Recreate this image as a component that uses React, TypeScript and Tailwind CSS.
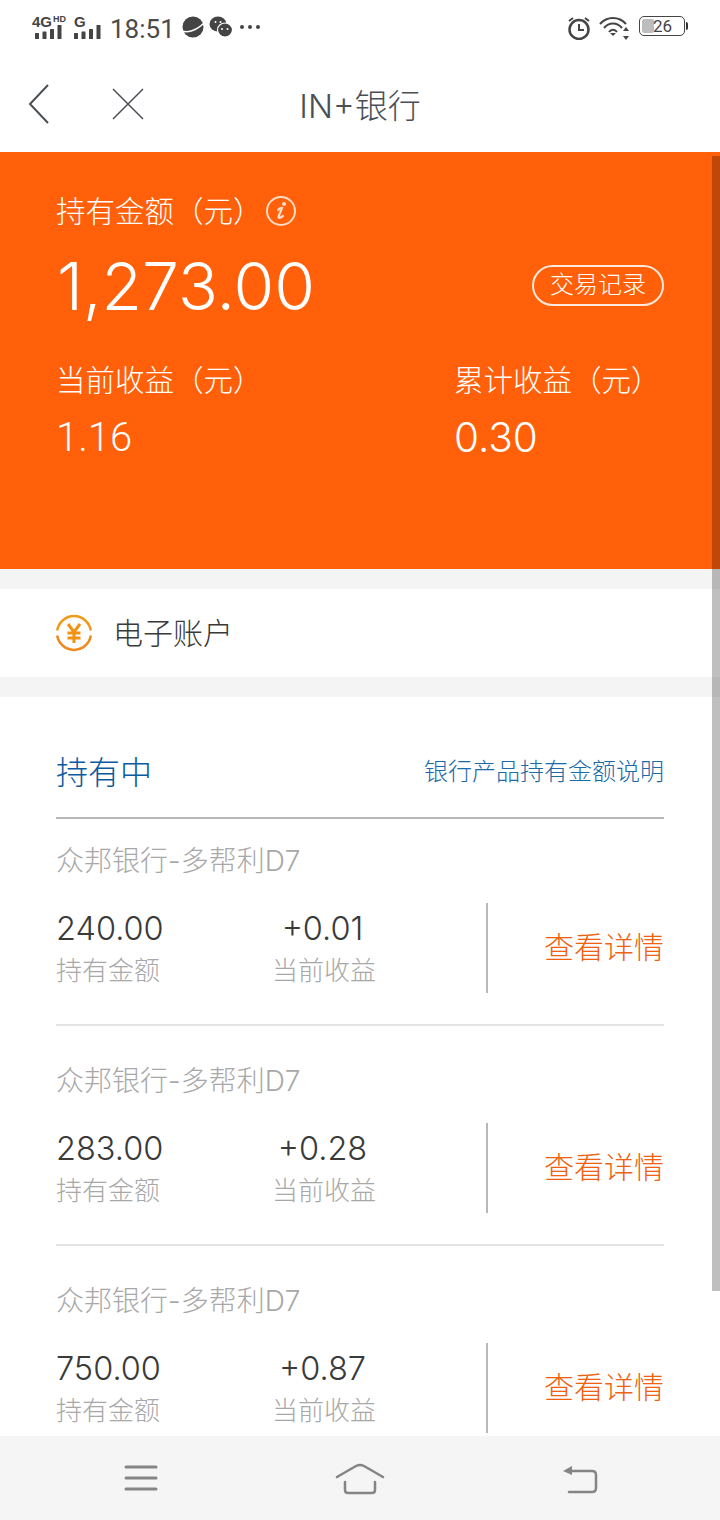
const cjk = "font-['Inter','Noto_Sans_CJK_SC',sans-serif]"

const holdings = [
  { amount: '240.00', gain: '+0.01' },
  { amount: '283.00', gain: '+0.28' },
  { amount: '750.00', gain: '+0.87' },
]

function SignalBars({ className }: { className?: string }) {
  return (
    <svg width="28" height="14" viewBox="0 0 28 14" fill="#444" className={className}>
      <rect x="0" y="8" width="4" height="6" rx="0.5" />
      <rect x="7.5" y="6.5" width="4" height="7.5" rx="0.5" />
      <rect x="15" y="4" width="4" height="10" rx="0.5" />
      <rect x="22.5" y="0" width="4" height="14" rx="0.5" />
    </svg>
  )
}

function StatusBar() {
  return (
    <div className="h-[60px] flex items-start justify-between relative">
      <div className="flex items-start pl-[32px] pt-[14px]">
        <div className="w-[36px] h-[26px] relative">
          <span className="absolute left-0 top-[1px] text-[15px] leading-[14px] font-bold text-[#444] font-['Liberation_Sans',sans-serif]">4G</span>
          <span className="absolute left-[21px] top-0 text-[9px] leading-[10px] font-bold text-[#444] font-['Liberation_Sans',sans-serif]">HD</span>
          <SignalBars className="absolute left-[3px] top-[11px]" />
        </div>
        <div className="w-[32px] h-[26px] relative ml-[6px]">
          <span className="absolute left-0 top-[1px] text-[15px] leading-[14px] font-bold text-[#444] font-['Liberation_Sans',sans-serif]">G</span>
          <SignalBars className="absolute left-[0px] top-[11px]" />
        </div>
        <span className="font-['Roboto',sans-serif] ml-[4px] text-[26px] leading-[30px] text-[#4a4a4a]">18:51</span>
        <svg width="24" height="24" viewBox="0 0 24 24" className="ml-[6px] mt-[1px]">
          <circle cx="12" cy="12" r="10.5" fill="#444" />
          <path d="M1 16 C6 18 15 16 23 8" fill="none" stroke="#fff" strokeWidth="1.5" />
        </svg>
        <svg width="24" height="24" viewBox="0 0 24 24" className="ml-[4px] mt-[1px]" fill="#444">
          <ellipse cx="9" cy="9" rx="8.5" ry="7.5" />
          <ellipse cx="16" cy="15" rx="7.5" ry="7" stroke="#fff" strokeWidth="1.2" />
          <circle cx="13" cy="14" r="1" fill="#fff" />
          <circle cx="18.5" cy="14" r="1" fill="#fff" />
          <circle cx="6.5" cy="7" r="1" fill="#fff" />
          <circle cx="11.5" cy="7" r="1" fill="#fff" />
        </svg>
        <div className="flex gap-[4px] ml-[7px] mt-[11px]">
          <span className="w-[4px] h-[4px] rounded-full bg-[#444]" />
          <span className="w-[4px] h-[4px] rounded-full bg-[#444]" />
          <span className="w-[4px] h-[4px] rounded-full bg-[#444]" />
        </div>
      </div>
      <div className="flex items-start pr-[32px] pt-[16px]">
        <svg width="24" height="24" viewBox="0 0 24 24" fill="none" stroke="#444" className="mr-[8px]">
          <circle cx="12" cy="13.5" r="9.5" strokeWidth="2.5" />
          <path d="M12 8v6h5" strokeWidth="2" />
          <path d="M2 5l4-3M22 5l-4-3" strokeWidth="2" />
        </svg>
        <svg width="32" height="24" viewBox="0 0 32 24" fill="none" stroke="#444" strokeWidth="2" className="mr-[8px]">
          <path d="M1 8 C8 0 20 0 27 8" />
          <path d="M5 12 C10 6 18 6 23 12" />
          <path d="M10 16 C12 13 16 13 18 16" fill="none" />
          <path d="M11 17h6l-3 3z" fill="#444" stroke="none" />
          <path d="M27 11l3 4h-6zM27 24l3-4h-6z" fill="#444" stroke="none" />
        </svg>
        <div className="w-[46px] h-[20px] rounded-[5px] border border-[#444] relative flex items-center">
          <div className="absolute left-[2px] top-[2px] bottom-[2px] w-[12px] rounded-[2px] bg-[#bdbdbd]" />
          <span className="font-['Roboto',sans-serif] relative ml-[13px] text-[17px] leading-[18px] text-[#444]">26</span>
        </div>
        <div className="w-[2px] h-[8px] bg-[#333] mt-[6px] ml-[1px] rounded-r-sm" />
      </div>
    </div>
  )
}

function NavBar() {
  return (
    <div className="h-[92px] relative flex items-center justify-center">
      <svg width="24" height="42" viewBox="0 0 24 42" fill="none" stroke="#4a4f55" strokeWidth="2" className="absolute left-[27px] top-[23px]">
        <path d="M21 2 L3 21 L21 40" />
      </svg>
      <svg width="34" height="34" viewBox="0 0 34 34" fill="none" stroke="#4a4f55" strokeWidth="1.5" className="absolute left-[111px] top-[27px]">
        <path d="M2 2 L32 32 M32 2 L2 32" />
      </svg>
      <span className="text-[33px] leading-[40px] text-[#4a4f55] font-light">IN+银行</span>
    </div>
  )
}

function InfoIcon() {
  return (
    <svg width="32" height="32" viewBox="0 0 32 32" fill="none" className="ml-[13px]">
      <circle cx="16" cy="16" r="14" stroke="#ffdcc4" strokeWidth="2" />
      <circle cx="19" cy="9" r="2" fill="#ffdcc4" />
      <path d="M13 15 Q15 12.5 17 13 L13.5 21.5 Q13 24.5 18 21" stroke="#ffdcc4" strokeWidth="2.2" strokeLinecap="round" />
    </svg>
  )
}

function SummaryPanel() {
  return (
    <section className="h-[417px] bg-[#ff6009] text-white px-[56px] pt-[40px]">
      <div className="flex items-center h-[38px]">
        <span className="text-[29.5px] leading-[38px] font-light w-[196px] whitespace-nowrap">持有金额（元）</span>
        <InfoIcon />
      </div>
      <div className="flex items-center justify-between mt-[20px] h-[72px]">
        <span className="text-[66px] leading-[72px] font-light ml-[1px]">1,273.00</span>
        <button className="w-[132px] h-[41px] rounded-full border-2 border-[#ffe9da] text-[24px] leading-[36px] font-light mt-[-2px]">交易记录</button>
      </div>
      <div className="flex mt-[39px]">
        <div className="w-[398px]">
          <div className="text-[29.5px] leading-[38px] font-light whitespace-nowrap">当前收益（元）</div>
          <div className="font-['Roboto',sans-serif] text-[40px] leading-[48px] mt-[15px] font-light">1.16</div>
        </div>
        <div>
          <div className="text-[29.5px] leading-[38px] font-light whitespace-nowrap">累计收益（元）</div>
          <div className="text-[40.5px] leading-[48px] mt-[15px] font-light">0.30</div>
        </div>
      </div>
    </section>
  )
}

function YuanIcon() {
  return (
    <svg width="38" height="38" viewBox="0 0 38 38" fill="none">
      <path d="M2.2 16.5 A17 17 0 0 1 35.8 16.5" stroke="#ee9b1c" strokeWidth="2.5" />
      <path d="M35.8 21.5 A17 17 0 0 1 2.2 21.5" stroke="#ee8a1c" strokeWidth="2.5" />
      <path d="M13 10 L19 18 L25 10 M12.5 19 H25.5 M12.5 24 H25.5 M19 18 V29" stroke="#f09314" strokeWidth="3" />
    </svg>
  )
}

function HoldingItem({ amount, gain }: { amount: string; gain: string }) {
  return (
    <div className="h-[207px] border-b-2 border-[#e4e4e4] pt-[28px]">
      <div className="text-[28px] leading-[28px] text-[#a8a8a8] font-light whitespace-nowrap">众邦银行-多帮利D7</div>
      <div className="flex h-[90px] mt-[28px]">
        <div className="w-[216px] pt-[8px]">
          <div className="text-[32.5px] leading-[36px] text-[#3a3a3a] font-light">{amount}</div>
          <div className="text-[26px] leading-[28px] mt-[10px] text-[#a8a8a8] font-light whitespace-nowrap">持有金额</div>
        </div>
        <div className="w-[104px] pt-[8px] text-center">
          <div className="text-[32.5px] leading-[36px] text-[#3a3a3a] font-light pr-[3px]">{gain}</div>
          <div className="text-[26px] leading-[28px] mt-[10px] text-[#a8a8a8] font-light whitespace-nowrap">当前收益</div>
        </div>
        <div className="w-[2px] h-[90px] ml-[110px] bg-[#b8b8b8]" />
        <div className="flex-1 flex items-center justify-end text-[30px] leading-[36px] text-[#ee6211] font-light whitespace-nowrap mt-[-3px]">查看详情</div>
      </div>
    </div>
  )
}

function BottomBar() {
  return (
    <div className="h-[84px] bg-[#f5f5f5] flex items-start shrink-0 relative z-10">
      <div className="flex-1 flex justify-between pl-[124px] pr-[122px] pt-[27px]">
        <svg width="34" height="30" viewBox="0 0 34 30" fill="none" stroke="#858585" strokeWidth="3" strokeLinecap="round">
          <path d="M2 4H32M2 15H32M2 26H32" />
        </svg>
        <svg width="50" height="32" viewBox="0 0 50 32" fill="none" stroke="#858585" strokeWidth="2.5" strokeLinecap="round" strokeLinejoin="round">
          <path d="M2 14 L21 3 Q25 1 29 3 L48 14" />
          <path d="M10 19 V27 Q10 30 13 30 H37 Q40 30 40 27 V19" />
        </svg>
        <svg width="36" height="32" viewBox="0 0 36 32" fill="none" stroke="#858585" strokeWidth="2.5" strokeLinecap="round">
          <path d="M8 8 H30 Q34 8 34 12 V25 Q34 29 30 29 H7" />
          <path d="M1 8 L10 3 V12 Z" fill="#858585" stroke="none" />
        </svg>
      </div>
    </div>
  )
}

export default function App() {
  return (
    <div className={`${cjk} w-[720px] h-[1520px] bg-white relative overflow-hidden flex flex-col`}>
      <div className="flex-1 overflow-hidden">
        <StatusBar />
        <NavBar />
        <SummaryPanel />
        <div className="h-[20px] bg-[#f4f4f4]" />
        <div className="h-[88px] flex items-center pl-[55px]">
          <YuanIcon />
          <span className="ml-[20px] text-[30px] leading-[36px] text-[#3a3a3a] font-light">电子账户</span>
        </div>
        <div className="h-[20px] bg-[#f4f4f4]" />

        {/* holdings list */}
        <div className="px-[56px]">
          <div className="h-[122px] border-b-2 border-[#b8b8b8] flex items-center justify-between pt-[30px]">
            <span className="text-[32px] leading-[40px] text-[#0a5a9e] font-light mt-[2px]">持有中</span>
            <span className="text-[24px] leading-[32px] text-[#1c6aa8] font-light">银行产品持有金额说明</span>
          </div>
          <div className="flex flex-col gap-[13px]">
            {holdings.map((h) => (
              <HoldingItem key={h.amount} amount={h.amount} gain={h.gain} />
            ))}
          </div>
        </div>
      </div>
      <BottomBar />
      {/* overlay scrollbar */}
      <div className="absolute left-[712px] top-[156px] w-[8px] h-[1135px] bg-black/25" />
    </div>
  )
}
